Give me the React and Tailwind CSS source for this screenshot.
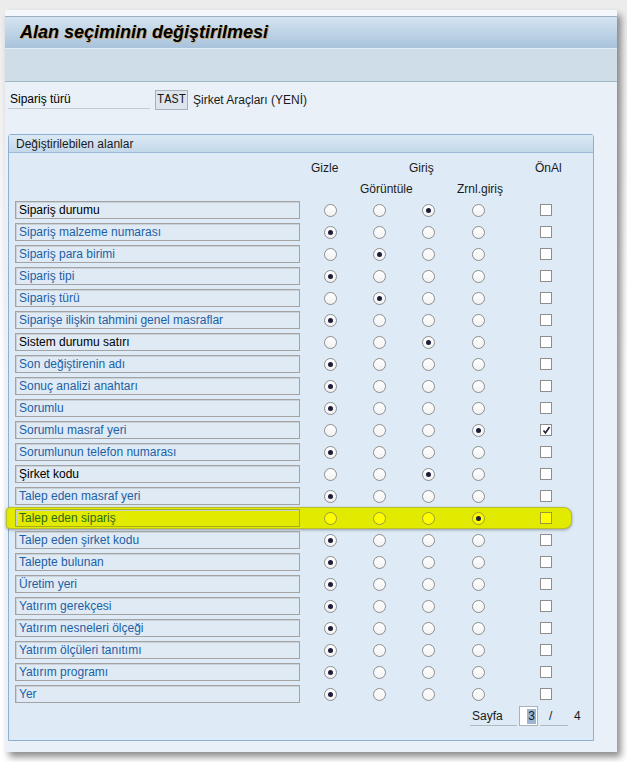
const FIELDS = [
  { label: 'Sipariş durumu', sel: 2, dark: true },
  { label: 'Sipariş malzeme numarası', sel: 0 },
  { label: 'Sipariş para birimi', sel: 1 },
  { label: 'Sipariş tipi', sel: 0 },
  { label: 'Sipariş türü', sel: 1 },
  { label: 'Siparişe ilişkin tahmini genel masraflar', sel: 0 },
  { label: 'Sistem durumu satırı', sel: 2, dark: true },
  { label: 'Son değiştirenin adı', sel: 0 },
  { label: 'Sonuç analizi anahtarı', sel: 0 },
  { label: 'Sorumlu', sel: 0 },
  { label: 'Sorumlu masraf yeri', sel: 3, checked: true },
  { label: 'Sorumlunun telefon numarası', sel: 0 },
  { label: 'Şirket kodu', sel: 2, dark: true },
  { label: 'Talep eden masraf yeri', sel: 0 },
  { label: 'Talep eden sipariş', sel: 3, hi: true },
  { label: 'Talep eden şirket kodu', sel: 0 },
  { label: 'Talepte bulunan', sel: 0 },
  { label: 'Üretim yeri', sel: 0 },
  { label: 'Yatırım gerekçesi', sel: 0 },
  { label: 'Yatırım nesneleri ölçeği', sel: 0 },
  { label: 'Yatırım ölçüleri tanıtımı', sel: 0 },
  { label: 'Yatırım programı', sel: 0 },
  { label: 'Yer', sel: 0 },
];

const Radio = ({ on, hi }) => (
  <span
    className={`w-[13px] h-[13px] rounded-full border flex items-center justify-center ${
      hi ? 'bg-[#ffff00] border-[#9a9a3a]' : 'bg-gradient-to-b from-[#ffffff] to-[#f2f2f2] border-[#8e8e8e]'
    }`}
  >
    {on && <span className="w-[5px] h-[5px] rounded-full bg-[#1e1e3a]" />}
  </span>
);

const Check = ({ on, hi }) => (
  <span
    className={`w-[12px] h-[12px] border flex items-center justify-center ${
      hi ? 'bg-[#ffff00] border-[#9a9a3a]' : 'bg-white border-[#8e8e8e]'
    }`}
  >
    {on && (
      <svg width="9" height="9" viewBox="0 0 9 9">
        <path d="M1.5 4.5 L3.5 7 L7.5 1" fill="none" stroke="#1e1e3a" strokeWidth="1.6" />
      </svg>
    )}
  </span>
);

const Row = ({ f }) => (
  <div className="relative grid grid-cols-[290px_50px_49px_49px_50px_86px] h-[18px] items-center">
    {f.hi && (
      <span className="absolute -left-[9px] right-[21px] -top-[2px] -bottom-[2px] rounded-r-[8px] rounded-l-[4px] bg-[#e2ea00] border border-[#b9bf2a] shadow-[0_1px_3px_rgba(0,0,0,0.35)]" />
    )}
    <div
      className={`relative w-[285px] h-[18px] border flex items-center pl-[3px] shadow-[inset_1px_1px_0_#c9d1d9] ${
        f.hi
          ? 'bg-[#e2ea00] border-[#a8ad1c] text-[#2d6b16]'
          : f.dark
          ? 'bg-[#dfeaf4] border-[#a3a3a3] text-black'
          : 'bg-[#dfeaf4] border-[#a3a3a3] text-[#1d5fa6]'
      }`}
    >
      {f.label}
    </div>
    {[0, 1, 2, 3].map(i => (
      <div key={i} className="relative flex justify-center">
        <Radio on={f.sel === i} hi={f.hi} />
      </div>
    ))}
    <div className="relative flex justify-center">
      <Check on={f.checked} hi={f.hi} />
    </div>
  </div>
);

export default function App() {
  return (
    <div
      className="w-[627px] h-[762px] bg-gradient-to-b from-[#ececec] via-[#ffffff] to-[#ffffff] pt-[10px] pl-[5px] text-[12px]"
      style={{ fontFamily: '"Liberation Sans", Arial, sans-serif' }}
    >
      <div className="w-[612px] h-[742px] flex flex-col bg-[#e9f0f7] shadow-[4px_5px_7px_rgba(0,0,0,0.45)]">
        {/* title */}
        <div className="h-[7px] bg-[#f4f7fb] border-b border-[#9eb0c3]" />
        <div className="h-[32px] bg-gradient-to-b from-[#d5e4f1] to-[#a9c3db] border-b border-[#e6eef5] flex items-center pl-[15px]">
          <span className="text-[18px] font-bold italic text-black [text-shadow:1px_1px_0_#c9a46a]">
            Alan seçiminin değiştirilmesi
          </span>
        </div>
        {/* toolbar */}
        <div className="h-[33px] bg-[#cfdde8] border-b border-[#a2b6c6]" />

        {/* content */}
        <div className="flex-1 flex flex-col pl-[3px] pt-[8px]">
          <div className="flex items-center h-[20px]">
            <div className="w-[142px] h-[20px] flex items-center pl-[2px] border-b border-[#c2c9cf] mt-[-2px]">
              Sipariş türü
            </div>
            <div
              className="ml-[5px] w-[33px] h-[20px] bg-[#dde5ec] border border-[#a9b2ba] flex items-center justify-center text-[12px] text-[#1a1a1a]"
              style={{ fontFamily: '"Liberation Mono", "Courier New", monospace' }}
            >
              TAST
            </div>
            <span className="ml-[5px] text-[#1a1a1a]">Şirket Araçları (YENİ)</span>
          </div>

          {/* group */}
          <div className="mt-[24px] w-[586px] h-[607px] border border-[#8eafcd] rounded-t-[3px] bg-[#deeaf5] flex flex-col">
            <div className="h-[18px] bg-gradient-to-b from-[#dce9f4] to-[#c3d8eb] border-b border-[#9dbbd6] flex items-center pl-[7px] text-[#1a1a1a]">
              Değiştirilebilen alanlar
            </div>
            <div className="flex flex-col pl-[6px] pt-[4px] text-[#1a1a1a]">
              <div className="flex h-[21px] items-center pl-[296px]">
                <span className="w-[98px]">Gizle</span>
                <span className="w-[126px]">Giriş</span>
                <span>ÖnAl</span>
              </div>
              <div className="flex h-[21px] items-center pl-[345px]">
                <span className="w-[97px]">Görüntüle</span>
                <span>Zrnl.giriş</span>
              </div>
              <div className="mt-[2px] flex flex-col gap-[4px]">
                {FIELDS.map(f => (
                  <Row key={f.label} f={f} />
                ))}
              </div>
              <div className="mt-[3px] flex items-center h-[20px] pl-[455px]">
                <div className="w-[47px] h-[20px] flex items-center pl-[2px] border-b border-[#b0b8c0]">Sayfa</div>
                <div className="ml-[2px] w-[19px] h-[20px] bg-white border border-[#a9b2ba] flex items-center justify-end pr-[1px]">
                  <span className="bg-[#9bb5d3] px-[1px] leading-[15px] text-[#1a1a1a]">3</span>
                </div>
                <div className="ml-[2px] w-[28px] h-[20px] flex items-center pl-[9px] border-b border-[#b0b8c0]">/</div>
                <span className="ml-[6px]">4</span>
              </div>
            </div>
          </div>
        </div>
      </div>
    </div>
  );
}
